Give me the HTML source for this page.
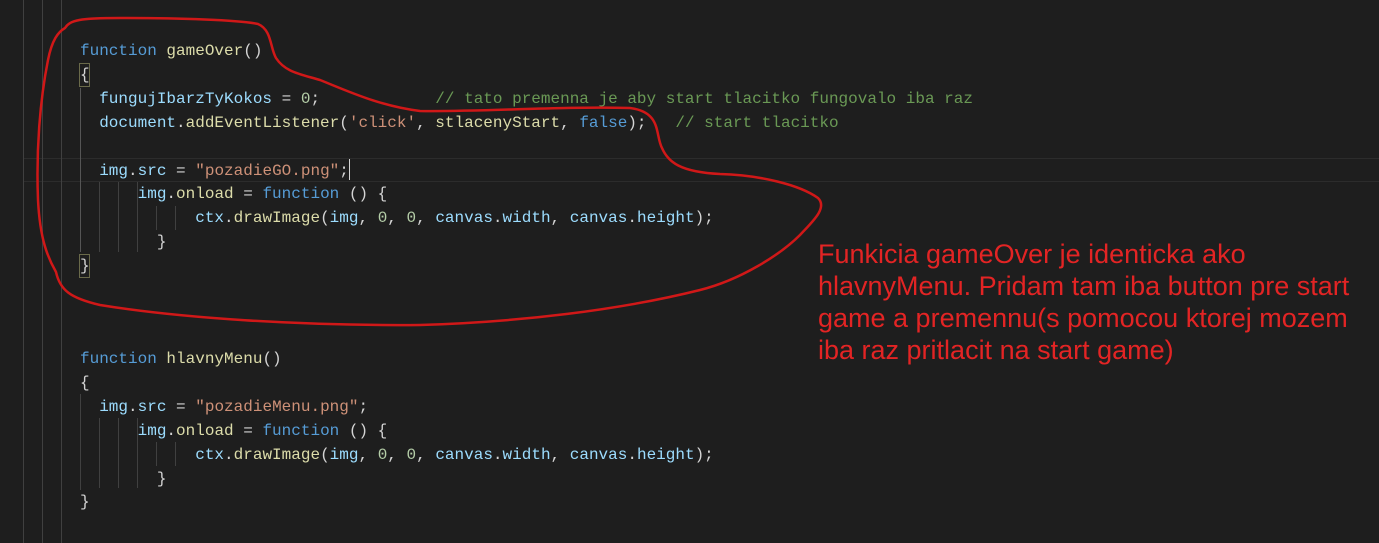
<!DOCTYPE html>
<html><head><meta charset="utf-8"><style>
html,body{margin:0;padding:0;background:#1e1e1e;width:1379px;height:543px;overflow:hidden;position:relative}
pre{margin:0;position:absolute;left:80px;font-family:"Liberation Mono",monospace;font-size:16px;line-height:23.9px;color:#d4d4d4}
.k{color:#569cd6}.f{color:#dcdcaa}.v{color:#9cdcfe}.s{color:#ce9178}.n{color:#b5cea8}.c{color:#6a9955}
.g{position:absolute;width:1px;background:#404040}
.hl{position:absolute;left:23px;top:158px;width:1356px;height:22px;border-top:1px solid #2c2c2c;border-bottom:1px solid #2c2c2c}
.note{position:absolute;left:818px;top:238px;font-family:"Liberation Sans",sans-serif;font-size:27px;line-height:32px;color:#e32424;white-space:nowrap}
.bx{position:absolute;border:1px solid #6a6a4a;width:9px;height:22px}
</style></head><body>
<div class="hl"></div>
<div class="g" style="left:23px;top:0;height:543px"></div>
<div class="g" style="left:42px;top:0;height:543px"></div>
<div class="g" style="left:61px;top:0;height:543px"></div>
<div class="g" style="left:80px;top:88px;height:164px;background:#555"></div>
<div class="g" style="left:99px;top:182px;height:70px"></div>
<div class="g" style="left:118px;top:182px;height:70px"></div>
<div class="g" style="left:137px;top:182px;height:70px"></div>
<div class="g" style="left:156px;top:206px;height:24px"></div>
<div class="g" style="left:175px;top:206px;height:24px"></div>
<div class="g" style="left:80px;top:394px;height:96px"></div>
<div class="g" style="left:99px;top:418px;height:70px"></div>
<div class="g" style="left:118px;top:418px;height:70px"></div>
<div class="g" style="left:137px;top:418px;height:70px"></div>
<div class="g" style="left:156px;top:442px;height:24px"></div>
<div class="g" style="left:175px;top:442px;height:24px"></div>
<div class="bx" style="left:79px;top:63px"></div>
<div class="bx" style="left:79px;top:254px"></div>
<div style="position:absolute;left:349px;top:159px;width:1px;height:21px;background:#d4d4d4"></div>
<pre style="top:40px"><span class="k">function</span> <span class="f">gameOver</span>()
{
  <span class="v">fungujIbarzTyKokos</span> = <span class="n">0</span>;            <span class="c">// tato premenna je aby start tlacitko fungovalo iba raz</span>
  <span class="v">document</span>.<span class="f">addEventListener</span>(<span class="s">'click'</span>, <span class="f">stlacenyStart</span>, <span class="k">false</span>);   <span class="c">// start tlacitko</span>

  <span class="v">img</span>.<span class="v">src</span> = <span class="s">"pozadieGO.png"</span>;
      <span class="v">img</span>.<span class="f">onload</span> = <span class="k">function</span> () {
            <span class="v">ctx</span>.<span class="f">drawImage</span>(<span class="v">img</span>, <span class="n">0</span>, <span class="n">0</span>, <span class="v">canvas</span>.<span class="v">width</span>, <span class="v">canvas</span>.<span class="v">height</span>);
        }
}</pre>
<pre style="top:348px"><span class="k">function</span> <span class="f">hlavnyMenu</span>()
{
  <span class="v">img</span>.<span class="v">src</span> = <span class="s">"pozadieMenu.png"</span>;
      <span class="v">img</span>.<span class="f">onload</span> = <span class="k">function</span> () {
            <span class="v">ctx</span>.<span class="f">drawImage</span>(<span class="v">img</span>, <span class="n">0</span>, <span class="n">0</span>, <span class="v">canvas</span>.<span class="v">width</span>, <span class="v">canvas</span>.<span class="v">height</span>);
        }
}</pre>
<svg style="position:absolute;left:0;top:0" width="1379" height="543">
<path d="M65,28 C70,20 80,18 120,18 C180,18 240,20 258,24 C272,30 270,48 276,58 C285,72 300,74 320,80 C350,92 380,106 420,111 C480,112 560,106 630,108 C662,112 655,135 662,148 C668,162 680,172 720,174 C760,175 800,185 818,198 C828,208 812,222 800,235 C780,255 740,280 700,290 C620,310 520,322 420,325 C300,326 180,318 100,305 C70,298 60,290 56,272 C48,258 40,240 38,200 C36,150 40,100 48,60 C52,40 58,32 65,28 Z" fill="none" stroke="#d01818" stroke-width="2.5"/>
</svg>
<div class="note">Funkicia gameOver je identicka ako<br>hlavnyMenu. Pridam tam iba button pre start<br>game a premennu(s pomocou ktorej mozem<br>iba raz pritlacit na start game)</div>
</body></html>
